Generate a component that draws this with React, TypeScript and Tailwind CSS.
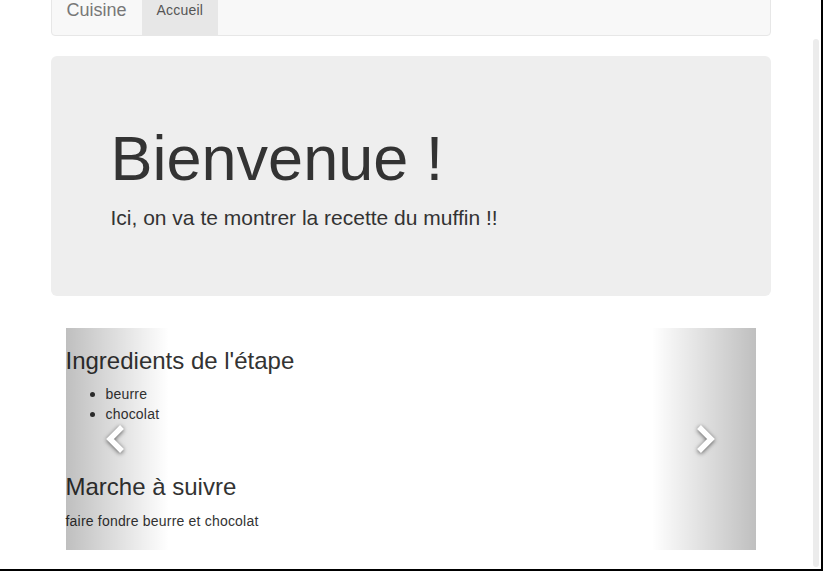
import React from "react";

function Chevron({ dir }: { dir: "left" | "right" }) {
  const points = dir === "left" ? "20,3 8,15 20,27" : "10,3 22,15 10,27";
  return (
    <svg
      width="30"
      height="30"
      viewBox="0 0 30 30"
      className="drop-shadow-[0_1px_2px_rgba(0,0,0,0.6)]"
    >
      <polyline
        points={points}
        fill="none"
        stroke="#fff"
        strokeWidth="5.5"
        strokeLinejoin="miter"
        strokeLinecap="butt"
      />
    </svg>
  );
}

export default function App() {
  return (
    <div className="relative h-[571px] overflow-hidden border-r-2 border-b-2 border-black bg-white font-['Liberation_Sans',Arial,sans-serif] text-[14px] leading-[20px] text-[#333]">
      <div className="mx-auto -mt-4 w-[720px]">
        <nav className="flex h-[52px] rounded border border-[#e7e7e7] bg-[#f8f8f8]">
          <span className="px-[15px] py-[15px] text-[18px] leading-[20px] text-[#777]">
            Cuisine
          </span>
          <span className="bg-[#e7e7e7] px-[15px] py-[15px] tracking-[0.2px] text-[#555]">
            Accueil
          </span>
        </nav>

        <div className="mt-5 rounded-md bg-[#eee] px-[60px] py-[48px]">
          <h1 className="mt-5 mb-[10px] text-[63px] leading-[1.1]">Bienvenue !</h1>
          <p className="mb-[15px] text-[21px] leading-[1.4]">
            Ici, on va te montrer la recette du muffin !!
          </p>
        </div>

        <div className="relative mx-[15px] mt-8 h-[222px]">
          <div className="pt-5 tracking-[0.2px]">
            <h3 className="text-[24px] leading-[1.1] tracking-normal">Ingredients de l'étape</h3>
            <ul className="mt-[10px] list-disc pl-10 marker:text-[16px]">
              <li>beurre</li>
              <li>chocolat</li>
            </ul>
            <h3 className="mt-[50px] text-[24px] leading-[1.1] tracking-normal">Marche à suivre</h3>
            <p className="mt-[11px]">faire fondre beurre et chocolat</p>
          </div>

          <div className="absolute inset-y-0 left-0 flex w-[15%] items-center justify-center bg-[linear-gradient(to_right,rgba(0,0,0,0.25),rgba(0,0,0,0.0001))]">
            <Chevron dir="left" />
          </div>
          <div className="absolute inset-y-0 right-0 flex w-[15%] items-center justify-center bg-[linear-gradient(to_right,rgba(0,0,0,0.0001),rgba(0,0,0,0.25))]">
            <Chevron dir="right" />
          </div>
        </div>
      </div>

      <div className="absolute top-[39px] right-[2px] h-[528px] w-[6px] rounded-full bg-[#ececec]" />
    </div>
  );
}
